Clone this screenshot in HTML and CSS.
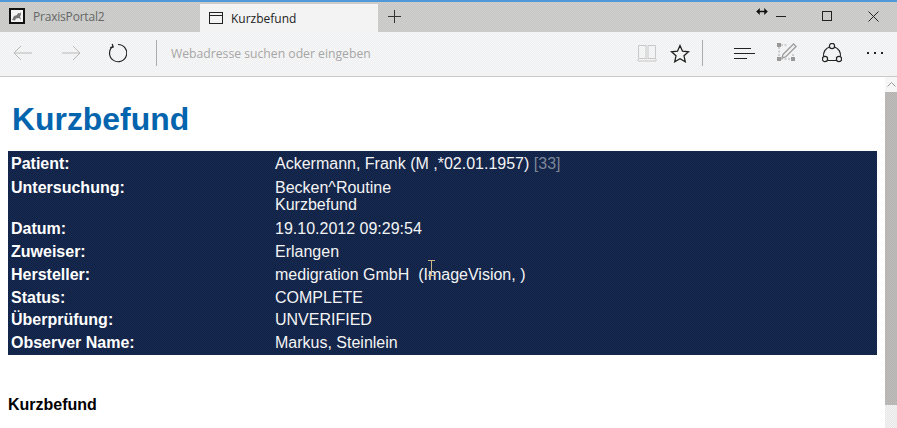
FILE: index.html
```html
<!DOCTYPE html>
<html lang="de">
<head>
<meta charset="utf-8">
<title>Kurzbefund</title>
<link rel="stylesheet" href="styles.css">
</head>
<body>
<div class="browser">
  <header class="tabbar">
    <div class="tab tab-inactive">
      <svg class="favicon" width="16" height="16" viewBox="0 0 16 16"><rect x="1" y="1" width="14" height="14" fill="#f4f4f4" stroke="#111" stroke-width="2"/><path d="M3 12l2-4 3-1 1-2 2 .5 1-1.500v3l-1 1 1 4-2-2-3 .5-1 2z" fill="#777"/></svg>
      <span>PraxisPortal2</span>
    </div>
    <div class="tab tab-active">
      <svg width="14" height="12" viewBox="0 0 14 12" fill="none" stroke="#222"><rect x=".5" y=".5" width="13" height="11"/><path d="M.5 3.500h13"/></svg>
      <span>Kurzbefund</span>
    </div>
    <svg class="newtab" width="13" height="13" viewBox="0 0 13 13" stroke="#333" fill="none"><path d="M6.500 0v13M0 6.500h13"/></svg>
    <div class="winctl">
      <svg class="resize-cursor" width="12" height="7" viewBox="0 0 12 7" fill="#111" stroke="#111"><path d="M2 3.500h8" stroke-width="1.500"/><path d="M3.500.5v6L.5 3.500zM8.500.5v6l3-3z" stroke-width=".5"/></svg>
      <svg width="10" height="10" viewBox="0 0 10 10" stroke="#222" fill="none"><path d="M0 5.500h10"/></svg>
      <svg width="10" height="10" viewBox="0 0 10 10" stroke="#222" fill="none"><rect x=".5" y=".5" width="9" height="9"/></svg>
      <svg width="11" height="11" viewBox="0 0 11 11" stroke="#222" fill="none"><path d="M.5.5l10 10M10.500.5l-10 10"/></svg>
    </div>
  </header>
  <nav class="toolbar">
    <svg class="back" width="20" height="16" viewBox="0 0 20 16" fill="none" stroke="#b9b9b9"><path d="M19 8H1M8 1L1 8l7 7"/></svg>
    <svg class="forward" width="20" height="16" viewBox="0 0 20 16" fill="none" stroke="#b9b9b9"><path d="M1 8h18M12 1l7 7-7 7"/></svg>
    <svg class="refresh" width="20" height="20" viewBox="0 0 20 20" fill="none" stroke="#222" stroke-width="1.200"><path d="M6 3.200A8.600 8.600 0 1 0 11 1.500"/><path d="M5.200 1l1 3-3 .6"/></svg>
    <div class="divider"></div>
    <span class="address">Webadresse suchen oder eingeben</span>
    <svg class="book" width="20" height="18" viewBox="0 0 20 18" fill="none" stroke="#c8c8c8"><path d="M1.500 1.500h7.500v13H1.500zM11 1.500h7.500v13H11zM1 15v2h18v-2M9 14.500q1 1 2 0"/><path d="M9.500 1.500v13h1v-13" stroke="#ddd"/></svg>
    <svg class="star" width="20" height="19" viewBox="0 0 20 19" fill="none" stroke="#222" stroke-width="1.300"><path d="M10 1.500l2.500 5.700 6 .6-4.500 4 1.300 6L10 14.800l-5.300 3 1.300-6-4.500-4 6-.6z"/></svg>
    <div class="divider divider-right"></div>
    <svg class="hub" width="21" height="13" viewBox="0 0 21 13" stroke="#222" fill="none"><path d="M0 1.500h17M0 6.500h21M0 11.500h13"/></svg>
    <svg class="note" width="20" height="20" viewBox="0 0 20 20" fill="none"><path d="M4 2h6M2 4v10M4 16h10M16 11v3" stroke="#a8a8a8" stroke-dasharray="2 1.500"/><path d="M6 11.500L16.500 1 19 3.500 8.500 14l-3.500 1z" stroke="#a0a0a0" stroke-width="1.400"/><path d="M0 0h4v4H0zM14 14h4v4h-4zM0 14h4v4H0z" fill="#999"/></svg>
    <svg class="share" width="20" height="20" viewBox="0 0 20 20" fill="none" stroke="#222" stroke-width="1.200"><path d="M7.600 4A8.500 8.500 0 0 0 1.600 13.500M12.400 4A8.500 8.500 0 0 1 18.400 13.500M5.500 17.500h9"/><circle cx="10" cy="3" r="2.600"/><circle cx="3" cy="16" r="2.600"/><circle cx="17" cy="16" r="2.600"/></svg>
    <div class="dots"><i></i><i></i><i></i></div>
  </nav>
  <div class="viewport">
    <main class="page">
      <h1 class="title">Kurzbefund</h1>
      <table class="info">
        <tr><th>Patient:</th><td>Ackermann, Frank (M ,*02.01.1957) <span class="muted">[33]</span></td></tr>
        <tr class="row-loose"><th>Untersuchung:</th><td>Becken^Routine<br>Kurzbefund</td></tr>
        <tr class="row-loose"><th>Datum:</th><td>19.10.2012 09:29:54</td></tr>
        <tr><th>Zuweiser:</th><td>Erlangen</td></tr>
        <tr><th>Hersteller:</th><td>medigration GmbH &nbsp;(I<span class="ibeam"></span>mageVision, )</td></tr>
        <tr class="row-tight"><th>Status:</th><td>COMPLETE</td></tr>
        <tr><th>Überprüfung:</th><td>UNVERIFIED</td></tr>
        <tr><th>Observer Name:</th><td>Markus, Steinlein</td></tr>
      </table>
      <h2 class="section">Kurzbefund</h2>
    </main>
    <aside class="scrollbar">
      <div class="scroll-up"><svg width="9" height="5" viewBox="0 0 9 5" fill="none" stroke="#999"><path d="M.5 4.500l4-4 4 4"/></svg></div>
      <div class="thumb"></div>
    </aside>
  </div>
</div>
</body>
</html>
```
FILE: styles.css
```css
* { box-sizing: border-box; }
html, body { margin: 0; height: 100%; overflow: hidden; }
body { font-family: "Liberation Sans", Arial, sans-serif; background: #fff; }
.browser { display: flex; flex-direction: column; height: 428px; width: 897px; }

.tabbar {
  height: 32px; flex: none; display: flex; align-items: flex-end;
  border-top: 2px solid #4f9bd9;
  padding-top: 2px;
  background: #cbccc9 repeating-conic-gradient(#c6c7c4 0 25%, #d0d1ce 0 50%) 0 0 / 2px 2px;
  font-family: "Open Sans", "Noto Sans", sans-serif; font-size: 12px;
}
.tab { display: flex; align-items: center; height: 28px; }
.tab-inactive { width: 200px; padding-left: 9px; gap: 8px; color: #666; padding-bottom: 4px; letter-spacing: -.2px; }
.favicon { flex: none; }
.tab-active { width: 178px; padding-left: 9px; gap: 8px; color: #222; background: #f3f3f3; }
.newtab { margin: 0 0 9px 10px; }
.winctl { margin-left: auto; height: 24px; align-self: flex-start; display: flex; align-items: center; position: relative; padding-right: 18px; gap: 36px; }
.resize-cursor { position: absolute; left: -20px; top: 4px; }

.toolbar {
  height: 45px; flex: none; display: flex; align-items: center;
  padding: 0 10px 2px 13px;
  background: #f2f3f3 repeating-conic-gradient(#eeeff0 0 25%, #f7f7f7 0 50%) 0 0 / 2px 2px;
  border-bottom: 1px solid #c9c9c9;
}
.forward { margin-left: 28px; }
.refresh { margin-left: 26px; }
.divider { width: 1px; height: 26px; background: #a9adb0; margin-left: 29px; }
.address { margin: 1px 0 0 14px; font-family: "Open Sans", "Noto Sans", sans-serif; font-size: 12.200px; color: #a6a6a6; width: 466px; }
.star { margin-left: 13px; }
.divider-right { margin-left: 12px; }
.hub { margin-left: 31px; }
.note { margin-left: 22px; }
.share { margin-left: 25px; }
.dots { margin-left: 25px; display: flex; gap: 5px; }
.dots i { width: 2px; height: 2px; background: #222; display: block; }

.viewport { flex: 1; display: flex; min-height: 0; }
.page { flex: 1; padding: 0 8px; overflow: hidden; }
.title { margin: 24px 0 0; padding-left: 4px; font-size: 31.900px; line-height: 37px; font-weight: 700; color: #0464ad; }
.info {
  margin-top: 13px; width: 869px; border-collapse: separate; border-spacing: 1px 2px;
  background: #14264a repeating-conic-gradient(#0f2144 0 25%, #192a50 0 50%) 0 0 / 2px 2px;
  color: #f4f4f4; font-size: 16px; line-height: 17px; table-layout: fixed;
}
.info th, .info td { padding: 2px 1px; text-align: left; vertical-align: top; }
.info th { width: 264px; padding-left: 2px; font-weight: 700; color: #fff; }
.info td { font-weight: 400; }
.info .row-loose th, .info .row-loose td { padding-top: 3px; }
.info .row-tight th, .info .row-tight td { padding-bottom: 1px; }
.muted { color: #7c8797; }
.ibeam {
  position: absolute; width: 7px; height: 16px; margin: -6px 0 0 0;
  border-top: 1px solid #c9b48a; border-bottom: 1px solid #c9b48a;
  background: linear-gradient(#c9b48a, #c9b48a) center / 1px 100% no-repeat;
}
.section { margin: 41px 0 0; font-size: 16px; line-height: 18px; font-weight: 700; color: #000; }

.scrollbar { width: 12px; flex: none; background: #ececec repeating-conic-gradient(#e6e6e6 0 25%, #f4f4f4 0 50%) 0 0 / 2px 2px; display: flex; flex-direction: column; }
.scroll-up { height: 15px; display: flex; align-items: center; justify-content: center; background: #f6f6f6; }
.thumb { height: 313px; background: #b9b7b4 repeating-conic-gradient(#b2b0b0 0 25%, #c0bebb 0 50%) 0 0 / 2px 2px; }
```
